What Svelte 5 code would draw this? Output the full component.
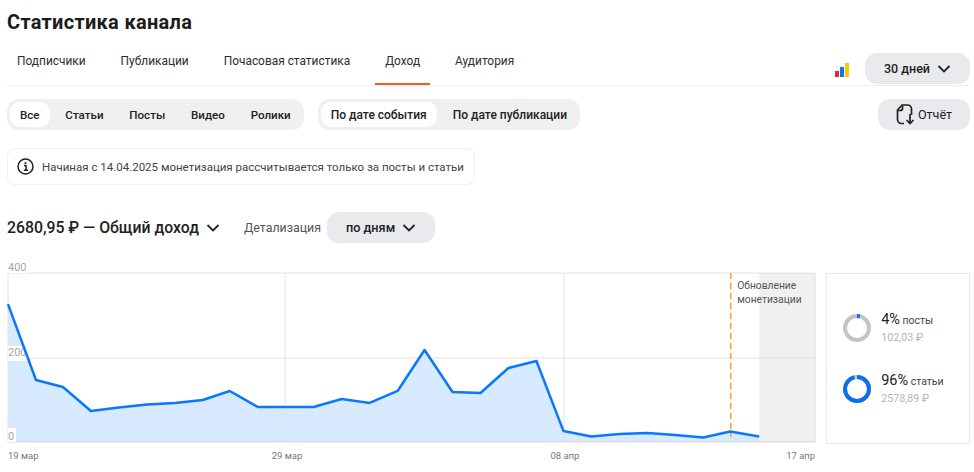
<script lang="ts">
	const tabs = ['Подписчики', 'Публикации', 'Почасовая статистика', 'Доход', 'Аудитория'];
	const types = ['Все', 'Статьи', 'Посты', 'Видео', 'Ролики'];
	const dates = ['По дате события', 'По дате публикации'];

	// chart coordinates, svg starts at the left edge of the row
	const top = 11;
	const bottom = 180;
	const points = [
		[8, 42], [36, 118], [63, 125], [91, 149], [119, 145.5], [147, 142.5], [175, 141], [203, 138],
		[230, 129], [258, 145], [286, 145], [314, 145], [342, 137], [370, 141], [398, 129], [425, 88],
		[453, 130], [481, 131], [509, 106], [537, 99], [564, 169], [592, 174.5], [620, 172], [648, 171],
		[676, 173], [704, 175.5], [731, 169.5], [760, 174.5]
	];
	const line = points.map((p) => p.join(',')).join(' ');
	const area = `8,${bottom} ${line} 760,${bottom}`;
	const xTicks = [
		{ x: 8, label: '19 мар' },
		{ x: 272, label: '29 мар' },
		{ x: 551, label: '08 апр' },
		{ x: 787, label: '17 апр' }
	];

	const circ = 2 * Math.PI * 12;
	const shares = [
		{ pct: 4, name: 'посты', sum: '102,03 ₽' },
		{ pct: 96, name: 'статьи', sum: '2578,89 ₽' }
	];
</script>

<main>
	<h1>Статистика канала</h1>

	<div class="tabbar">
		<nav>
			{#each tabs as tab}
				<button class="tab" class:active={tab === 'Доход'}>{tab}</button>
			{/each}
		</nav>
		<div class="period">
			<svg class="bars" width="14" height="14" viewBox="0 0 14 14">
				<rect x="0" y="8" width="4" height="6" fill="#f5222d" />
				<rect x="5" y="4" width="4" height="10" fill="#0a77f5" />
				<rect x="10" y="0" width="4" height="14" fill="#ffc800" />
			</svg>
			<button class="soft period-btn">
				30 дней
				<svg class="chev" width="14" height="8" viewBox="0 0 14 8"><path d="M1.5 1 7 6.5 12.5 1" /></svg>
			</button>
		</div>
	</div>

	<div class="filters">
		<div class="segment types">
			{#each types as t, i}
				<button class:on={i === 0}>{t}</button>
			{/each}
		</div>
		<div class="segment dates">
			{#each dates as d, i}
				<button class:on={i === 0}>{d}</button>
			{/each}
		</div>
		<button class="soft report">
			<svg width="19" height="21" viewBox="0 0 19 21" fill="none" stroke="#222" stroke-width="1.7">
				<path d="M8 19.500H5.500A4 4 0 0 1 1.500 15.500V6L6 1H11.500A4 4 0 0 1 15.500 5V11" />
				<path d="M6.500 1.500V4.500A2 2 0 0 1 4.500 6.500H1.800" />
				<path d="M14 10V19M10.500 16 14 19.500 17.500 16" />
			</svg>
			Отчёт
		</button>
	</div>

	<div class="notice">
		<svg width="17" height="17" viewBox="0 0 17 17" fill="none">
			<circle cx="8.500" cy="8.500" r="7.500" stroke="#222" stroke-width="1.500" />
			<circle cx="8.500" cy="5" r="1.100" fill="#222" />
			<path d="M7 7.500H9V12M7 12.300H11" stroke="#222" stroke-width="1.500" />
		</svg>
		Начиная с 14.04.2025 монетизация рассчитывается только за посты и статьи
	</div>

	<div class="summary">
		<span class="total">2680,95 ₽ — Общий доход</span>
		<svg class="chev total-chev" width="14" height="8" viewBox="0 0 14 8"><path d="M1.5 1 7 6.500 12.500 1" /></svg>
		<span class="detail">Детализация</span>
		<button class="soft by-day">
			по дням
			<svg class="chev" width="14" height="8" viewBox="0 0 14 8"><path d="M1.5 1 7 6.500 12.500 1" /></svg>
		</button>
	</div>

	<div class="chart-row">
		<svg class="chart" width="820" height="204" viewBox="0 -4 820 204">
			<rect x="760" y={top} width="56" height={bottom - top} fill="#f0f0f0" />
			<polygon points={area} fill="#d8eaff" />
			<g stroke="#e2e2e2" stroke-width="1">
				<line x1="8" x2="816" y1={top} y2={top} />
				<line x1="8" x2="816" y1="96" y2="96" />
				<line x1="8" x2="8" y1={top} y2={bottom} />
				<line x1="285.500" x2="285.500" y1={top} y2={bottom} opacity="0.9" />
				<line x1="564.500" x2="564.500" y1={top} y2={bottom} />
				<line x1="816" x2="816" y1={top} y2={bottom} />
			</g>
			<line x1="8" x2="816" y1={bottom} y2={bottom} stroke="#d4d4d4" />
			<rect x="8" y="0" width="19" height="11" fill="#fff" />
			<rect x="8" y="84" width="19" height="15" fill="#fff" />
			<rect x="8" y="166" width="8" height="14" fill="#fff" />
			<text class="axis" x="8" y="9">400</text>
			<text class="axis" x="8" y="94">200</text>
			<text class="axis" x="8" y="178">0</text>
			<polyline points={line} fill="none" stroke="#0a77ff" stroke-width="2.500" stroke-linejoin="round" />
			<line x1="731.500" x2="731.500" y1={top} y2="175" stroke="#f5a623" stroke-width="1.600" stroke-dasharray="6 4" />
			<text class="note" x="738" y="27">Обновление</text>
			<text class="note" x="738" y="41">монетизации</text>
			{#each xTicks as tick}
				<text class="tick" x={tick.x} y="197">{tick.label}</text>
			{/each}
		</svg>

		<aside>
			{#each shares as s}
				<div class="share">
					<svg width="30" height="30" viewBox="0 0 30 30" fill="none">
						<circle cx="15" cy="15" r="12" stroke="#c4c4c4" stroke-width="4" />
						<circle
							cx="15"
							cy="15"
							r="12"
							stroke="#0a6fe8"
							stroke-width="4"
							stroke-dasharray="{(circ * s.pct) / 100} {circ}"
							transform="rotate(-90 15 15)"
						/>
					</svg>
					<div>
						<div class="share-top"><b>{s.pct}%</b> {s.name}</div>
						<div class="share-sum">{s.sum}</div>
					</div>
				</div>
			{/each}
		</aside>
	</div>
</main>

<style>
	:global(body) {
		background: #fff;
		color: #222;
		font-family: Roboto, 'Noto Sans', sans-serif;
	}

	main {
		width: 974px;
		height: 472px;
		box-sizing: border-box;
		padding: 9px 4px 0 7px;
		overflow: hidden;
	}

	button {
		font: inherit;
		color: inherit;
		border: none;
		background: none;
		padding: 0;
		cursor: pointer;
	}

	h1 {
		margin: 0;
		font-size: 20px;
		line-height: 26px;
		font-weight: 700;
		letter-spacing: 0.3px;
		color: #1c1c1c;
	}

	.tabbar {
		display: flex;
		justify-content: space-between;
		align-items: flex-end;
		margin-top: 7px;
		height: 43px;
		border-bottom: 1px solid #eee;
	}

	nav {
		display: flex;
		gap: 15px;
		height: 43px;
	}

	.tab {
		padding: 0 10px 4px;
		font-size: 11.900px;
		height: 43px;
		box-sizing: border-box;
		color: #2e2e2e;
		border-bottom: 2px solid transparent;
		margin-bottom: -1px;
	}

	.tab.active {
		border-bottom-color: #fc5a1e;
	}

	.period {
		display: flex;
		align-items: center;
		gap: 16px;
		margin-bottom: 1px;
	}

	.bars {
		margin-top: 3px;
	}

	.soft {
		display: flex;
		align-items: center;
		justify-content: center;
		background: #e9eaee;
		border-radius: 12px;
		font-size: 12.500px;
		font-weight: 500;
		height: 31px;
	}

	.chev {
		fill: none;
		stroke: #222;
		stroke-width: 1.800;
	}

	.period-btn {
		width: 105px;
		gap: 7px;
	}

	.filters {
		display: flex;
		gap: 14px;
		margin-top: 13px;
	}

	.segment {
		display: flex;
		gap: 6px;
		height: 31px;
		box-sizing: border-box;
		padding: 3px;
		background: #f0f0f0;
		border-radius: 12px;
	}

	.segment button {
		padding: 0 10px;
		border-radius: 10px;
		font-size: 12px;
		font-weight: 500;
	}

	.segment.types {
		gap: 5.750px;
	}

	.segment.types button {
		font-size: 11.600px;
	}

	.segment button.on {
		background: #fff;
	}

	.report {
		margin-left: auto;
		width: 92px;
		gap: 3px;
		font-size: 12.600px;
		font-weight: 400;
	}

	.notice {
		display: inline-flex;
		align-items: center;
		gap: 8px;
		height: 37px;
		box-sizing: border-box;
		margin-top: 18px;
		padding: 0 10px 0 9px;
		border: 1px solid #f0f0f0;
		border-radius: 8px;
		font-size: 11.500px;
		color: #444;
	}

	.summary {
		display: flex;
		align-items: center;
		margin-top: 27px;
	}

	.total {
		font-size: 15.800px;
		font-weight: 500;
	}

	.total-chev {
		margin-left: 7px;
	}

	.detail {
		margin-left: 24px;
		font-size: 12.400px;
		color: #555;
	}

	.by-day {
		margin-left: 6px;
		width: 108px;
		gap: 7px;
		font-size: 12.700px;
	}

	.chart-row {
		display: flex;
		align-items: flex-start;
		margin: 15px 0 0 -7px;
	}

	.axis {
		font-size: 11px;
		fill: #a8a8a8;
	}

	.tick {
		font-size: 9.500px;
		fill: #777;
	}

	.note {
		font-size: 10.300px;
		fill: #555;
	}

	aside {
		display: flex;
		flex-direction: column;
		justify-content: center;
		gap: 27px;
		box-sizing: border-box;
		width: 144px;
		height: 171px;
		margin: 15px 0 0 7px;
		padding-left: 15px;
		border: 1px solid #e8e8e8;
	}

	.share {
		display: flex;
		align-items: center;
		gap: 9px;
	}

	.share-top {
		font-size: 10.500px;
		line-height: 18px;
		color: #444;
	}

	.share-top b {
		font-size: 14.500px;
		font-weight: 400;
		color: #222;
	}

	.share-sum {
		font-size: 10.700px;
		line-height: 15px;
		color: #b4b4b4;
	}
</style>
